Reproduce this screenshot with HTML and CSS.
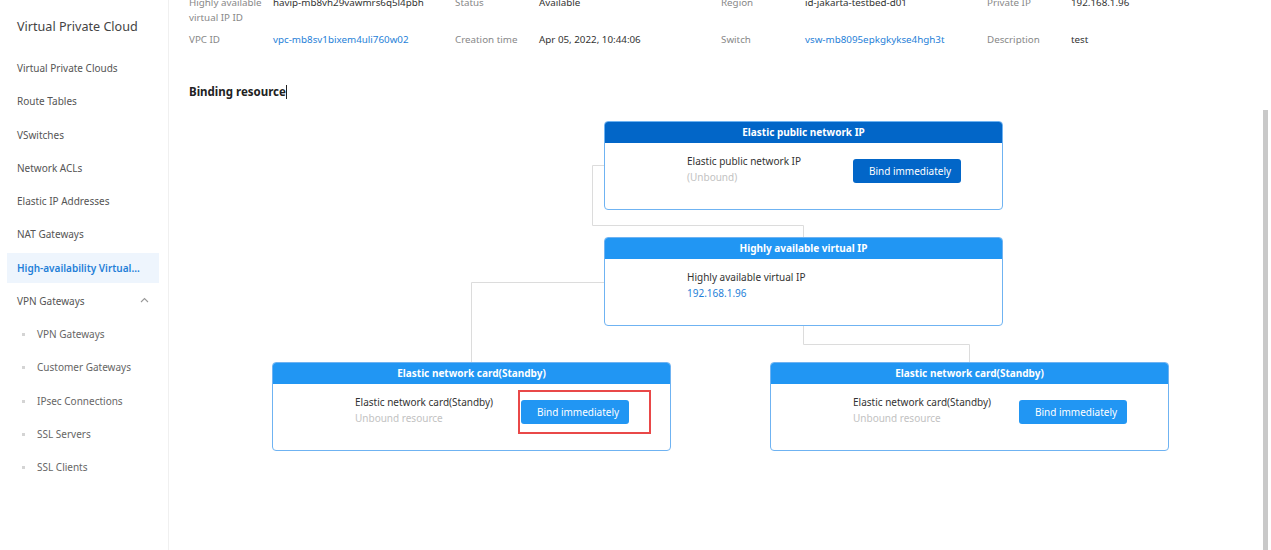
FILE: index.html
```html
<!DOCTYPE html>
<html lang="en">
<head>
  <meta charset="UTF-8" />
  <title>Highly available virtual IP - Binding resource</title>
  <link rel="stylesheet" href="styles.css">
</head>
<body>
  <aside class="sidebar">
    <div class="sidebar-title">Virtual Private Cloud</div>
    <ul class="nav">
      <li class="nav-item">Virtual Private Clouds</li>
      <li class="nav-item">Route Tables</li>
      <li class="nav-item">VSwitches</li>
      <li class="nav-item">Network ACLs</li>
      <li class="nav-item">Elastic IP Addresses</li>
      <li class="nav-item">NAT Gateways</li>
      <li class="nav-item active">High-availability Virtual...</li>
      <li class="nav-item group">
        VPN Gateways
        <svg class="chevron" width="9" height="6" viewBox="0 0 9 6"><path d="M1 5 L4.5 1.5 L8 5" fill="none" stroke="#999" stroke-width="1.1"/></svg>
      </li>
      <li class="nav-item sub">VPN Gateways</li>
      <li class="nav-item sub">Customer Gateways</li>
      <li class="nav-item sub">IPsec Connections</li>
      <li class="nav-item sub">SSL Servers</li>
      <li class="nav-item sub">SSL Clients</li>
    </ul>
  </aside>

  <main class="main">
    <div class="info">
      <div class="info-row">
        <div class="label">Highly available virtual IP ID</div>
        <div class="value">havip-mb8vh29vawmrs6q5l4pbh</div>
        <div class="label">Status</div>
        <div class="value">Available</div>
        <div class="label">Region</div>
        <div class="value">id-jakarta-testbed-d01</div>
        <div class="label">Private IP</div>
        <div class="value">192.168.1.96</div>
      </div>
      <div class="info-row">
        <div class="label">VPC ID</div>
        <div class="value"><a href="#">vpc-mb8sv1bixem4uli760w02</a></div>
        <div class="label">Creation time</div>
        <div class="value">Apr 05, 2022, 10:44:06</div>
        <div class="label">Switch</div>
        <div class="value"><a href="#">vsw-mb8095epkgkykse4hgh3t</a></div>
        <div class="label">Description</div>
        <div class="value">test</div>
      </div>
    </div>

    <h3 class="section-title">Binding resource<span class="caret"></span></h3>

    <div class="diagram">
      <svg class="links" width="1000" height="360">
        <path d="M415 55.5 H403.5 V115.5 H614.5 V127" />
        <path d="M415 172.5 H282.5 V252" />
        <path d="M614.5 216 V234.5 H780.5 V252" />
      </svg>

      <div class="node eip" style="left:415px; top:11px">
        <div class="node-head">Elastic public network IP</div>
        <div class="node-body">
          <div class="node-text">
            <div>Elastic public network IP</div>
            <div class="muted">(Unbound)</div>
          </div>
          <button class="bind">Bind immediately</button>
        </div>
      </div>

      <div class="node" style="left:415px; top:127px">
        <div class="node-head">Highly available virtual IP</div>
        <div class="node-body">
          <div class="node-text">
            <div>Highly available virtual IP</div>
            <div class="ip">192.168.1.96</div>
          </div>
        </div>
      </div>

      <div class="node" style="left:83px; top:252px">
        <div class="node-head">Elastic network card(Standby)</div>
        <div class="node-body">
          <div class="node-text">
            <div>Elastic network card(Standby)</div>
            <div class="muted">Unbound resource</div>
          </div>
          <button class="bind">Bind immediately</button>
        </div>
      </div>
      <div class="highlight"></div>

      <div class="node" style="left:581px; top:252px">
        <div class="node-head">Elastic network card(Standby)</div>
        <div class="node-body">
          <div class="node-text">
            <div>Elastic network card(Standby)</div>
            <div class="muted">Unbound resource</div>
          </div>
          <button class="bind">Bind immediately</button>
        </div>
      </div>
    </div>
  </main>

  <div class="scroll-thumb"></div>
</body>
</html>
```

FILE: styles.css
```css
body {
  margin: 0;
  font-family: "Noto Sans", "Open Sans", sans-serif;
  font-size: 10px;
  color: #333;
  background: #fff;
  display: flex;
  height: 550px;
  overflow: hidden;
}

/* sidebar */
.sidebar {
  width: 168px;
  flex: none;
  border-right: 1px solid #f0f0f0;
}
.sidebar-title {
  font-size: 12.6px;
  color: #444;
  padding: 18px 0 0 17px;
  line-height: 18px;
}
.nav {
  list-style: none;
  margin: 17px 0 0;
  padding: 0;
}
.nav-item {
  position: relative;
  height: 30px;
  line-height: 30px;
  margin: 0 9px 3.25px 7px;
  padding-left: 10px;
  color: #555;
  white-space: nowrap;
}
.nav-item.active {
  background: #eef5fd;
  color: #1f7fd8;
  font-weight: 600;
}
.nav-item.group .chevron {
  position: absolute;
  right: 10px;
  top: 11px;
}
.nav-item.sub {
  padding-left: 30px;
  color: #666;
}
.nav-item.sub::before {
  content: "";
  position: absolute;
  left: 15px;
  top: 14px;
  width: 3px;
  height: 3px;
  background: #d4d4d4;
}

/* main */
.main {
  flex: 1;
  padding-left: 20px;
  position: relative;
}
.info {
  margin-top: -5px;
  font-size: 9.8px;
}
.info-row {
  display: grid;
  grid-template-columns: 84px 182px 84px 182px 84px 182px 84px 150px;
  line-height: 15px;
  margin-bottom: 7px;
}
.label {
  color: #888;
  padding-right: 8px;
}
.value {
  color: #333;
}
.value a {
  color: #1f7fd8;
  text-decoration: none;
}
.section-title {
  margin: 37px 0 0;
  font-size: 11.5px;
  font-weight: 700;
  color: #222;
  line-height: 16px;
}
.caret {
  display: inline-block;
  width: 1px;
  height: 14px;
  background: #222;
  vertical-align: -3px;
}

/* diagram */
.diagram {
  position: relative;
  height: 360px;
  margin-top: 10px;
}
.links {
  position: absolute;
  left: 0;
  top: 0;
}
.links path {
  fill: none;
  stroke: #dcdcdc;
  stroke-width: 1;
}
.node {
  position: absolute;
  width: 397px;
  height: 87px;
  border: 1px solid #6fb3f2;
  border-radius: 4px;
  overflow: hidden;
  background: #fff;
}
.node-head {
  height: 21px;
  line-height: 21px;
  background: #2196f3;
  color: #fff;
  font-weight: 700;
  text-align: center;
}
.eip .node-head {
  background: #0266c8;
}
.node-body {
  display: flex;
  align-items: flex-start;
  padding: 11px 0 0 82px;
}
.node-text {
  width: 166px;
  line-height: 15.5px;
  color: #333;
}
.muted {
  color: #c2c2c2;
}
.ip {
  color: #1f7fd8;
}
.bind {
  margin-top: 5px;
  width: 108px;
  height: 24px;
  border: none;
  border-radius: 3px;
  background: #2196f3;
  color: #fff;
  font-family: inherit;
  font-size: 10px;
  padding: 0 0 0 6px;
  cursor: pointer;
}
.eip .bind {
  background: #0266c8;
}
.highlight {
  position: absolute;
  left: 329px;
  top: 280px;
  width: 129px;
  height: 40px;
  border: 2px solid #e94848;
}

.scroll-thumb {
  position: fixed;
  left: 1263px;
  top: 110px;
  width: 5px;
  bottom: 0;
  background: #c9c9c9;
}
```
